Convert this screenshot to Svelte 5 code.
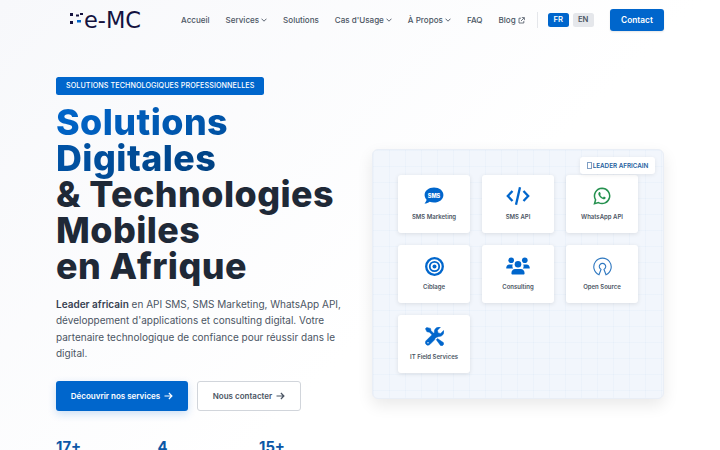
<script>
  const nav = [
    { label: 'Accueil' },
    { label: 'Services', caret: true },
    { label: 'Solutions' },
    { label: "Cas d'Usage", caret: true },
    { label: 'À Propos', caret: true },
    { label: 'FAQ' },
    { label: 'Blog', ext: true }
  ];
  const cards = ['sms', 'code', 'wa', 'target', 'users', 'osi', 'tools'];
  const labels = {
    sms: 'SMS Marketing', code: 'SMS API', wa: 'WhatsApp API', target: 'Ciblage',
    users: 'Consulting', osi: 'Open Source', tools: 'IT Field Services'
  };
  const stats = ['17+', '4', '15+'];
</script>

<div class="page">
  <header class="top">
    <div class="logo">
      <svg class="dots" width="14" height="12" viewBox="0 0 14 12" aria-hidden="true">
        <rect x="0" y="0" width="3" height="3" fill="#14123f" />
        <rect x="6" y="1.500" width="3" height="2" fill="#14123f" />
        <rect x="10" y="0" width="3" height="2" fill="#14123f" />
        <rect x="0" y="8" width="3" height="3" fill="#14123f" />
        <rect x="7" y="7" width="4" height="2.500" fill="#0066cc" />
      </svg>
      <span>e-MC</span>
    </div>
    <nav class="menu">
      {#each nav as n}
        <span class="link">
          {n.label}
          {#if n.caret}
            <svg width="6" height="4" viewBox="0 0 6 4"><path d="M.5.7 3 3.200 5.500.7" fill="none" stroke="currentColor" stroke-width=".9" /></svg>
          {/if}
          {#if n.ext}
            <svg width="7" height="7" viewBox="0 0 7 7"><path d="M3 1.200H1v4.800h4.800V4M3.800.6h2.600v2.600M6.200.8 3 4" fill="none" stroke="currentColor" stroke-width=".8" /></svg>
          {/if}
        </span>
      {/each}
    </nav>
    <div class="sep"></div>
    <div class="langs">
      <span class="lang on">FR</span>
      <span class="lang">EN</span>
    </div>
    <span class="contact">Contact</span>
  </header>

  <main class="hero">
    <section class="left">
      <div class="pill">SOLUTIONS TECHNOLOGIQUES PROFESSIONNELLES</div>
      <h1>
        <span class="grad">Solutions<br />Digitales</span><br />
        &amp; Technologies<br />Mobiles<br />en Afrique
      </h1>
      <p class="lead">
        <strong>Leader africain</strong> en API SMS, SMS Marketing, WhatsApp API,
        développement d'applications et consulting digital. Votre partenaire
        technologique de confiance pour réussir dans le digital.
      </p>
      <div class="actions">
        <span class="btn primary">Découvrir nos services
          <svg width="9" height="8" viewBox="0 0 9 8"><path d="M.5 4h7.400M4.900 1l3 3-3 3" fill="none" stroke="currentColor" stroke-width="1.200" /></svg>
        </span>
        <span class="btn ghost">Nous contacter
          <svg width="9" height="8" viewBox="0 0 9 8"><path d="M.5 4h7.400M4.900 1l3 3-3 3" fill="none" stroke="currentColor" stroke-width="1.200" /></svg>
        </span>
      </div>
      <div class="stats">
        {#each stats as s}<div class="stat">{s}</div>{/each}
      </div>
    </section>

    <section class="panel">
      <div class="tag"><span class="tofu"></span>LEADER AFRICAIN</div>
      <div class="cards">
        {#each cards as c}
          <div class="card">
            <div class="ic">
              {#if c === 'sms'}
                <svg width="20" height="18" viewBox="0 0 20 18">
                  <path d="M10 .6C4.700.6.6 3.900.6 8c0 1.800.8 3.400 2 4.700-.4 1.500-1.500 3.100-2.200 3.900 1.900.1 3.800-.8 5.200-1.800 1.300.5 2.800.8 4.400.8 5.300 0 9.400-3.300 9.400-7.600S15.300.6 10 .6Z" fill="#0066cc" />
                  <text x="10" y="10.600" text-anchor="middle" class="smstxt">SMS</text>
                </svg>
              {:else if c === 'code'}
                <svg width="24" height="20" viewBox="0 0 24 20" fill="none" stroke="#0066cc" stroke-width="2.300">
                  <path d="M6.500 5 1.800 10l4.700 5M17.500 5l4.700 5-4.700 5" />
                  <path d="M14 1.200 10 18.800" />
                </svg>
              {:else if c === 'wa'}
                <svg width="18" height="18" viewBox="0 0 18 18">
                  <path d="M9.100 1.300a7.600 7.600 0 0 0-6.500 11.500L1.500 16.700l4-1.100A7.600 7.600 0 1 0 9.100 1.300Z" fill="none" stroke="#25914f" stroke-width="1.500" />
                  <path d="M6.500 5.100c-.3 0-.8.300-1 .9-.4 1 0 2.300 1 3.500 1.100 1.400 2.500 2.400 3.900 2.700 1 .2 1.900-.3 2.100-1 .1-.4.1-.8 0-.9l-1.600-.8-.8 1c-1.300-.5-2.300-1.400-2.900-2.600l.6-.8-.7-1.800c-.1-.2-.4-.2-.6-.2Z" fill="#25914f" />
                </svg>
              {:else if c === 'target'}
                <svg width="19" height="19" viewBox="0 0 19 19" fill="none" stroke="#0066cc">
                  <circle cx="9.500" cy="9.500" r="8.300" stroke-width="2.300" />
                  <circle cx="9.500" cy="9.500" r="4.700" stroke-width="1.800" />
                  <circle cx="9.500" cy="9.500" r="2" fill="#0066cc" stroke="none" />
                </svg>
              {:else if c === 'users'}
                <svg width="24" height="18" viewBox="0 0 24 18" fill="#0066cc">
                  <circle cx="5.200" cy="3.300" r="2.800" />
                  <circle cx="18.800" cy="3.300" r="2.800" />
                  <circle cx="12" cy="7.200" r="3.300" />
                  <path d="M.2 11c0-2 1.300-3.600 3.200-3.600h2.400c.4 0 .7.100 1 .2-.3.600-.5 1.200-.4 2 0 .8.300 1.400.7 2H.8c-.4 0-.6-.2-.6-.6ZM23.800 11c0-2-1.300-3.600-3.200-3.600h-2.400c-.4 0-.7.100-1 .2.300.6.500 1.200.4 2 0 .8-.3 1.400-.7 2h6.300c.4 0 .6-.2.600-.6ZM5.400 16.200c0-2.300 1.600-4.200 3.800-4.200h5.600c2.200 0 3.800 1.900 3.800 4.200 0 .9-.5 1.300-1.200 1.300H6.600c-.7 0-1.200-.4-1.200-1.300Z" />
                </svg>
              {:else if c === 'osi'}
                <svg width="19" height="19" viewBox="0 0 19 19" fill="none" stroke="#2f78c0" stroke-width="1.100">
                  <path d="M6 17.800A8.700 8.700 0 1 1 13 17.800L11 12.400A3.200 3.200 0 1 0 8 12.400Z" />
                </svg>
              {:else}
                <svg width="19" height="19" viewBox="0 0 19 19" fill="#0066cc" stroke="#0066cc" stroke-width=".5">
                  <path d="M1.700.4 .4 1.700l1.500 3 2.600.6 5.600 5.600 1.600-1.600-5.600-5.600L5.500 1.400Z" />
                  <path d="M13.900 9.500a4.600 4.600 0 0 0 4.700-6l-2.900 2.900-2.700-.5-.5-2.700L15.400.3a4.600 4.600 0 0 0-6 5.100L1 13.800a2.700 2.700 0 0 0 3.800 3.800l4.800-4.800.8-2.100Z" />
                  <path d="m11.300 12.800 1.200-1.200 5.800 3.900c.6.800.5 1.700 0 2.300l-.6.600c-.6.600-1.500.6-2.200 0Z" />
                  <circle cx="3" cy="15.800" r=".7" fill="#fff" stroke="none" />
                </svg>
              {/if}
            </div>
            <div class="name">{labels[c]}</div>
          </div>
        {/each}
      </div>
    </section>
  </main>
</div>

<style>
  :global(html), :global(body) { margin: 0; height: 450px; overflow: hidden; }
  .page {
    height: 450px;
    overflow: hidden;
    box-sizing: border-box;
    padding: 0 56px;
    font-family: Inter, sans-serif;
    background: linear-gradient(135deg, #f7f8fb 0%, #ffffff 60%);
    color: #1f2937;
  }
  .top { display: flex; align-items: center; height: 40px; }
  .logo { flex: none; display: flex; align-items: center; width: 125px; padding-left: 14px; box-sizing: border-box; }
  .dots { flex: none; margin-bottom: 2px; }
  .logo span { font-family: "DejaVu Sans", sans-serif; font-size: 22.500px; color: #14123f; line-height: 1; }
  .menu { flex: none; display: flex; align-items: center; gap: 16px; font-size: 8.050px; font-weight: 500; color: #4b5563; }
  .link { display: inline-flex; align-items: center; gap: 2px; white-space: nowrap; }
  .sep { flex: none; width: 1px; height: 16px; background: #e5e7eb; margin: 0 10px 0 12px; }
  .langs { flex: none; display: flex; gap: 4px; }
  .lang { width: 21px; height: 14px; line-height: 14px; text-align: center; font-size: 7.700px; font-weight: 600; border-radius: 2.500px; background: #e5e7eb; color: #4b5563; }
  .lang.on { background: #0066cc; color: #fff; }
  .contact { flex: none; margin-left: auto; width: 54px; height: 22px; line-height: 22px; text-align: center; background: #0066cc; color: #fff; font-size: 8.320px; font-weight: 600; border-radius: 3px; box-shadow: 0 1px 2px rgba(0, 0, 0, .1); }

  .hero { display: grid; grid-template-columns: 284px 292px; column-gap: 32px; align-items: start; }
  .left { padding-top: 37px; }
  .pill { display: inline-block; background: #0066cc; color: #fff; font-size: 7.200px; font-weight: 500; line-height: 18px; padding: 0 10px; border-radius: 2.500px; letter-spacing: .08px; vertical-align: top; }
  h1 { margin: 7px 0 0; font-family: Inter, sans-serif; font-size: 35.840px; line-height: 36px; font-weight: 800; letter-spacing: .45px; color: #1f2937; white-space: nowrap; }
  .grad { background: linear-gradient(135deg, #0066cc, #004080); -webkit-background-clip: text; background-clip: text; color: transparent; }
  .lead { margin: 12px 0 0; font-size: 10px; line-height: 16.400px; color: #4b5563; width: 290px; }
  .lead strong { font-weight: 600; color: #374151; }
  .actions { display: flex; gap: 9px; margin-top: 19px; }
  .btn { display: inline-flex; align-items: center; justify-content: center; gap: 4px; height: 30px; box-sizing: border-box; font-size: 8px; font-weight: 600; border-radius: 3px; white-space: nowrap; }
  .primary { width: 132px; background: #0066cc; color: #fff; box-shadow: 0 3px 8px rgba(0, 102, 204, .2); }
  .ghost { width: 104px; background: #fff; border: 1px solid #d1d5db; color: #4b5563; }
  .stats { display: flex; margin-top: 24.500px; }
  .stat { flex: none; width: 101.500px; color: #0b57a6; font-size: 14.800px; font-weight: 700; line-height: 24px; }

  .panel { position: relative; margin-top: 109px; box-sizing: border-box; height: 250px; padding: 26px; border-radius: 6px; background-color: #f2f6fc; background-image: linear-gradient(rgba(0, 102, 204, .025) 1px, transparent 1px), linear-gradient(90deg, rgba(0, 102, 204, .025) 1px, transparent 1px); background-size: 16px 16px; border: 1px solid #e9eef6; box-shadow: 0 6px 16px rgba(0, 0, 0, .09); }
  .tag { position: absolute; top: 7px; right: 8px; height: 17px; width: 75px; display: flex; align-items: center; justify-content: center; background: #fff; border-radius: 3px; color: #1f5f9e; font-size: 6.300px; font-weight: 600; box-shadow: 0 1px 4px rgba(0, 0, 0, .08); white-space: nowrap; }
  .tofu { width: 3px; height: 5px; border: .5px solid #7f9fc4; margin-right: 1px; flex: none; }
  .cards { display: grid; grid-template-columns: repeat(3, 72px); grid-auto-rows: 58px; gap: 12px; margin: -1px; }
  .card { background: #fff; border-radius: 3px; box-shadow: 0 1px 4px rgba(0, 0, 0, .1); display: flex; flex-direction: column; align-items: center; }
  .ic { height: 26px; margin-top: 8px; display: flex; align-items: center; justify-content: center; }
  .name { margin-top: 3.500px; font-size: 6px; font-weight: 600; color: #4b5563; white-space: nowrap; }
  .smstxt { font: 800 5.500px Inter, sans-serif; fill: #fff; }
</style>
